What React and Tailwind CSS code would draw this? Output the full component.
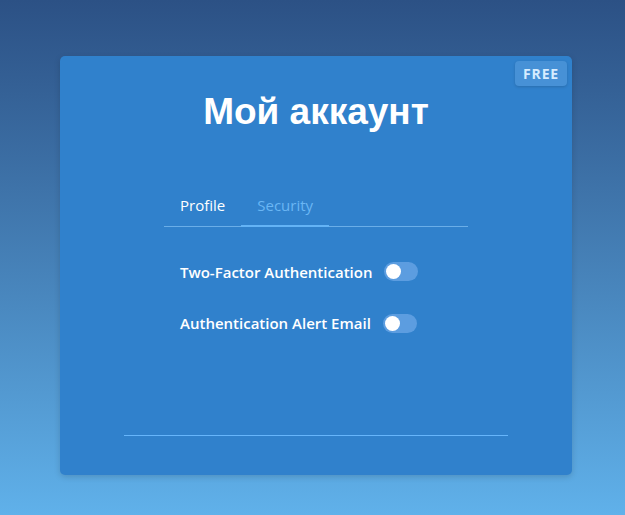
import React from 'react';

// Small toggle switch (off state)
const Toggle = () => (
    <div className="w-[34px] h-[19px] rounded-full bg-[#5c9de0] flex items-center px-[2px]">
        <div className="w-[15px] h-[15px] rounded-full bg-white" />
    </div>
);

export default function App() {
    return (
        <div className="w-[625px] h-[515px] bg-gradient-to-b from-[#2c5185] to-[#60b1ea] flex pl-[60px] pt-[56px] font-['Open_Sans',sans-serif]">
            <div className="relative w-[512px] h-[419px] bg-[#3081cc] rounded-[5px] shadow-[0_2px_6px_rgba(0,0,0,0.15)] flex flex-col items-center">
                <span className="absolute top-[5px] right-[5px] px-[8px] py-[2px] rounded-[4px] bg-[#4791d6] text-[#d6ecff] text-[14px] font-bold tracking-[0.06em] shadow-[0_1px_3px_rgba(0,0,0,0.15)]">
                    FREE
                </span>

                <h1 className="mt-[32px] text-[37px] leading-[48px] font-bold text-white font-['Liberation_Sans',Arial,sans-serif]">
                    Мой аккаунт
                </h1>

                {/* Tabs */}
                <div className="mt-[58px] w-[304px] flex border-b border-[#6aaee8]">
                    <button className="px-4 pb-[9px] text-[15px] text-white">Profile</button>
                    <button className="px-4 pb-[8px] text-[15px] text-[#6ab6f4] border-b-2 border-[#63b3f6] -mb-px">Security</button>
                </div>

                <div className="w-[304px] px-4 mt-[34px] flex flex-col gap-[29px]">
                    <div className="flex items-center gap-[12px]">
                        <span className="text-[15px] font-semibold text-white">Two-Factor Authentication</span>
                        <Toggle />
                    </div>
                    <div className="flex items-center gap-[12px]">
                        <span className="text-[15px] font-semibold text-white">Authentication Alert Email</span>
                        <Toggle />
                    </div>
                </div>

                <div className="mt-auto mb-[39px] w-[384px] h-px bg-[#66b5fb]" />
            </div>
        </div>
    );
}
